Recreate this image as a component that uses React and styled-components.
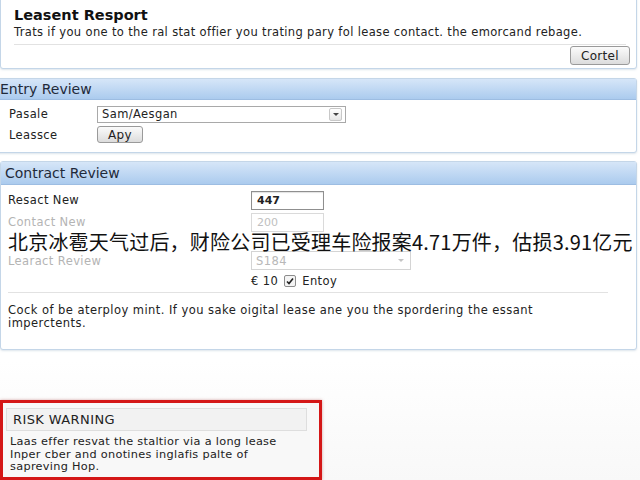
import React from "react";
import styled, { createGlobalStyle } from "styled-components";

const GlobalStyle = createGlobalStyle`
  html, body {
    margin: 0;
    padding: 0;
    background: #ffffff;
  }
  body {
    font-family: "DejaVu Sans", Verdana, sans-serif;
    color: #1e1e1e;
    overflow: hidden;
  }
`;

const Page = styled.div`
  width: 640px;
  height: 480px;
  position: relative;
  display: flex;
  flex-direction: column;
  background: linear-gradient(#ffffff 75%, #f8f8f8);
`;

const Panel = styled.section`
  box-sizing: border-box;
  margin-left: ${(p) => p.$offset || 0}px;
  width: ${(p) => 637 - (p.$offset || 0)}px;
  margin-top: ${(p) => p.$top || 0}px;
  height: ${(p) => p.$height}px;
  background: #fff;
  border: 1px solid #c4d6e8;
  border-radius: 3px;
  box-shadow: 0 1px 2px rgba(120, 150, 180, 0.25);
  display: flex;
  flex-direction: column;
`;

const Intro = styled.div`
  padding: 10px 6px 0 13px;
  display: flex;
  flex-direction: column;
`;

const Title = styled.h1`
  margin: 0;
  font-size: 14.5px;
  font-weight: bold;
  line-height: 16px;
  color: #111;
`;

const Lead = styled.p`
  margin: 2px 0 0;
  font-size: 11.5px;
  letter-spacing: 0.35px;
  line-height: 14px;
  color: #222;
  white-space: nowrap;
`;

const Rule = styled.hr`
  border: 0;
  border-top: 1px solid #e2e2e2;
  margin: ${(p) => p.$margin || "6px 0 0"};
  width: ${(p) => p.$width || "auto"};
`;

const ButtonRow = styled.div`
  display: flex;
  justify-content: flex-end;
  margin-top: 1px;
`;

const Button = styled.button`
  box-sizing: border-box;
  height: ${(p) => p.$h || 18}px;
  width: ${(p) => p.$w}px;
  padding: 0;
  font-family: "DejaVu Sans", Verdana, sans-serif;
  font-size: 12px;
  letter-spacing: 0.3px;
  color: #222;
  background: linear-gradient(#fbfbfb, #dcdcdc);
  border: 1px solid #9a9a9a;
  border-radius: 3px;
`;

const Header = styled.div`
  height: ${(p) => p.$h}px;
  flex-shrink: 0;
  box-sizing: border-box;
  padding-left: ${(p) => p.$pad}px;
  display: flex;
  align-items: center;
  font-size: 14px;
  color: #1f2a3a;
  background: linear-gradient(#d6e6f8, #abcbee);
  border-bottom: 1px solid #9dbde2;
`;

const Form = styled.div`
  display: flex;
  flex-direction: column;
  padding: ${(p) => p.$pad};
`;

const Row = styled.div`
  display: flex;
  align-items: center;
  height: ${(p) => p.$h || 20}px;
  margin-top: ${(p) => p.$mt || 0}px;
`;

const Label = styled.span`
  width: ${(p) => p.$w}px;
  flex-shrink: 0;
  font-size: 11.5px;
  letter-spacing: 0.4px;
  color: ${(p) => (p.$muted ? "#b4b4b4" : "#222")};
`;

const Select = styled.div`
  box-sizing: border-box;
  width: ${(p) => p.$w}px;
  height: ${(p) => p.$h || 18}px;
  display: flex;
  align-items: center;
  justify-content: space-between;
  padding: 0 3px 0 4px;
  font-size: 11.5px;
  letter-spacing: 0.4px;
  color: ${(p) => (p.$muted ? "#b8b8b8" : "#222")};
  background: #fff;
  border: 1px solid ${(p) => (p.$muted ? "#d4d4d4" : "#a9a9a9")};
`;

const Caret = styled.span`
  box-sizing: border-box;
  width: 13px;
  height: 13px;
  display: flex;
  align-items: center;
  justify-content: center;
  border: ${(p) => (p.$plain ? "0" : "1px solid #c8c8c8")};
  border-radius: 2px;
  background: ${(p) => (p.$plain ? "none" : "linear-gradient(#fff, #e6e6e6)")};
  &::after {
    content: "";
    border-left: 3px solid transparent;
    border-right: 3px solid transparent;
    border-top: 3px solid ${(p) => (p.$plain ? "#c4c4c4" : "#444")};
  }
`;

const Input = styled.div`
  box-sizing: border-box;
  width: 73px;
  height: 19px;
  padding: 0 5px;
  display: flex;
  align-items: center;
  font-size: 11px;
  color: ${(p) => (p.$muted ? "#c0c0c0" : "#222")};
  font-weight: ${(p) => (p.$muted ? "normal" : "bold")};
  border: 1px solid ${(p) => (p.$muted ? "#dadada" : "#8f8f8f")};
  box-shadow: ${(p) => (p.$muted ? "none" : "inset 0 1px 1px rgba(0,0,0,0.12)")};
`;

const Inline = styled.span`
  display: flex;
  align-items: center;
  gap: 6px;
  font-size: 11.5px;
  letter-spacing: 0.4px;
  color: #222;
`;

const Check = styled.span`
  box-sizing: border-box;
  width: 12px;
  height: 12px;
  border: 1px solid #8c8c8c;
  border-radius: 2px;
  background: #f4f4f4;
  display: inline-flex;
  align-items: center;
  justify-content: center;
`;

const Note = styled.p`
  margin: 11px 0 0;
  font-size: 11.5px;
  letter-spacing: 0.45px;
  line-height: 13px;
  color: #222;
`;

const Caption = styled.div`
  position: absolute;
  left: 8px;
  top: 229px;
  font-family: "Noto Sans CJK SC", "Noto Sans", sans-serif;
  font-size: 20px;
  line-height: 26px;
  color: #111;
  white-space: nowrap;
  letter-spacing: 0.2px;
`;

const Warning = styled.div`
  box-sizing: border-box;
  margin-top: 50px;
  width: 322px;
  height: 80px;
  border: 3px solid #d41717;
  background: #f8f8f8;
  padding: 5px 12px 0 3px;
  display: flex;
  flex-direction: column;
  box-shadow: 0 0 3px rgba(140, 0, 0, 0.35);
`;

const WarningHead = styled.div`
  box-sizing: border-box;
  height: 23px;
  padding-left: 6px;
  display: flex;
  align-items: center;
  font-size: 13px;
  letter-spacing: 0.4px;
  color: #222;
  background: #f2f2f2;
  border: 1px solid #dedede;
`;

const WarningText = styled.p`
  margin: 5px 0 0 4px;
  font-size: 11.3px;
  letter-spacing: 0.3px;
  line-height: 12.5px;
  color: #222;
  white-space: nowrap;
`;

export default function App() {
  return (
    <Page>
      <GlobalStyle />
      <Panel $top={-4} $height={73}>
        <Intro>
          <Title>Leasent Resport</Title>
          <Lead>
            Trats if you one to the ral stat offier you trating pary fol lease
            contact. the emorcand rebage.
          </Lead>
          <Rule $margin="5px 4px 0 0" />
          <ButtonRow>
            <Button $w={60} $h={19}>Cortel</Button>
          </ButtonRow>
        </Intro>
      </Panel>

      <Panel $top={9} $offset={-4} $height={75}>
        <Header $h={21} $pad={3}>Entry Review</Header>
        <Form $pad="5px 0 0 12px">
          <Row $h={18}>
            <Label $w={88}>Pasale</Label>
            <Select $w={249} $h={17}>
              Sam/Aesgan
              <Caret />
            </Select>
          </Row>
          <Row $h={19} $mt={2}>
            <Label $w={88}>Leassce</Label>
            <Button $w={46} $h={17}>Apy</Button>
          </Row>
        </Form>
      </Panel>

      <Panel $top={8} $height={189}>
        <Header $h={23} $pad={4}>Contract Review</Header>
        <Form $pad="5px 0 0 7px">
          <Row $h={20}>
            <Label $w={243}>Resact New</Label>
            <Input>447</Input>
          </Row>
          <Row $h={20} $mt={2}>
            <Label $w={243} $muted>Contact New</Label>
            <Input $muted>200</Input>
          </Row>
          <Row $h={19} $mt={19}>
            <Label $w={243} $muted>Learact Review</Label>
            <Select $w={160} $h={19} $muted>
              S184
              <Caret $plain />
            </Select>
          </Row>
          <Row $h={20} $mt={1}>
            <Label $w={243} />
            <Inline>
              € 10
              <Check>
                <svg width="8" height="8" viewBox="0 0 8 8">
                  <path d="M1 4.5 L3 6.5 L7 1.5" stroke="#222" strokeWidth="1.6" fill="none" />
                </svg>
              </Check>
              Entoy
            </Inline>
          </Row>
          <Rule $margin="1px 0 0" $width="600px" />
          <Note>
            Cock of be aterploy mint. If you sake oigital lease ane you the
            spordering the essant
            <br />
            imperctents.
          </Note>
        </Form>
      </Panel>

      <Warning>
        <WarningHead>RISK WARNING</WarningHead>
        <WarningText>
          Laas effer resvat the staltior via a long lease
          <br />
          Inper cber and onotines inglafis palte of
          <br />
          sapreving Hop.
        </WarningText>
      </Warning>

      <Caption>北京冰雹天气过后，财险公司已受理车险报案4.71万件，估损3.91亿元</Caption>
    </Page>
  );
}
